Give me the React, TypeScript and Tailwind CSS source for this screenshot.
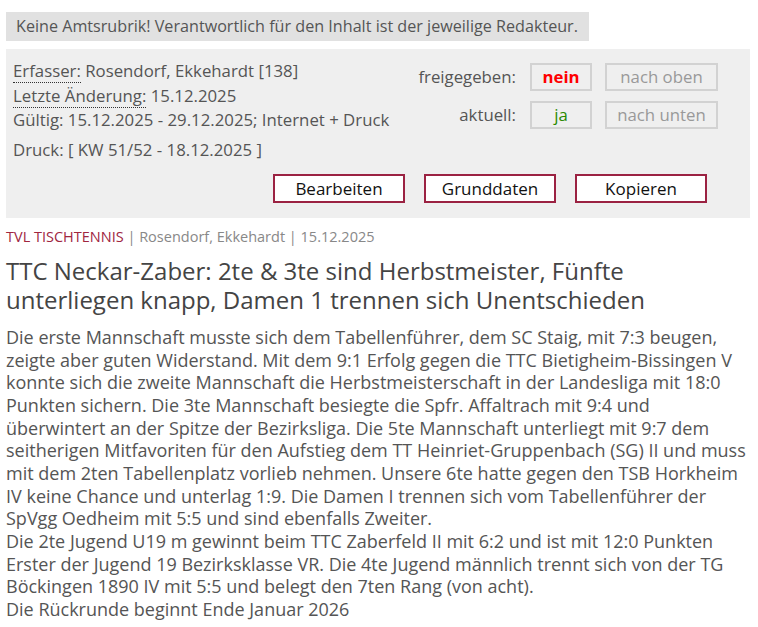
import React from 'react';

const font = { fontFamily: '"Open Sans", Arial, sans-serif' };

const StatusRow: React.FC<{ label: string; value: string; valueClass: string; move: string }> = ({
  label,
  value,
  valueClass,
  move,
}) => (
  <div className="flex items-center">
    <span className="w-[130px] pr-[14px] text-right">{label}</span>
    <span
      className={`flex h-[28px] w-[62px] items-center justify-center border-2 border-[#d2d2d2] ${valueClass}`}
    >
      {value}
    </span>
    <span className="ml-[13px] flex h-[28px] w-[113px] items-center justify-center border-2 border-[#d2d2d2] text-[#999]">
      {move}
    </span>
  </div>
);

export default function App() {
  return (
    <div className="w-[744px] ml-[6px] pt-[12px] text-[#555]" style={font}>
      {/* Notice */}
      <div className="inline-block bg-[#e1e1e1] pl-[10px] pr-[11px] h-[29px] leading-[29px] text-[16.15px]">
        Keine Amtsrubrik! Verantwortlich für den Inhalt ist der jeweilige Redakteur.
      </div>

      {/* Admin panel */}
      <div className="mt-[8px] bg-[#efefef] h-[169px] px-[7px] pt-[10px] text-[16.8px]">
        <div className="flex">
          <div className="flex-1 leading-[24.5px]">
            <div>
              <span className="border-b border-dotted border-[#333]">Erfasser:</span> Rosendorf, Ekkehardt [138]
            </div>
            <div>
              <span className="border-b border-dotted border-[#333]">Letzte Änderung:</span> 15.12.2025
            </div>
            <div>Gültig: 15.12.2025 - 29.12.2025; Internet + Druck</div>
            <div className="mt-[5px]">Druck: [ KW 51/52 - 18.12.2025 ]</div>
          </div>
          <div className="flex flex-col gap-[10px] pt-[4px] pr-[25px]">
            <StatusRow label="freigegeben:" value="nein" valueClass="font-bold text-[#f00]" move="nach oben" />
            <StatusRow label="aktuell:" value="ja" valueClass="text-[#2a8a00]" move="nach unten" />
          </div>
        </div>
        <div className="mt-[12px] flex justify-end gap-[19px] pr-[36px]">
          {['Bearbeiten', 'Grunddaten', 'Kopieren'].map(label => (
            <button
              key={label}
              className="h-[29px] w-[132px] border-2 border-[#9b2242] bg-white text-[17px] leading-[25px] text-[#111]"
            >
              {label}
            </button>
          ))}
        </div>
      </div>

      {/* Meta */}
      <div className="mt-[8px] text-[14.5px] leading-[22px] text-[#888]">
        <span className="text-[#a0263f]">TVL TISCHTENNIS</span> | Rosendorf, Ekkehardt | 15.12.2025
      </div>

      {/* Title */}
      <h1 className="mt-[8px] text-[24px] leading-[29px] text-[#444]">
        TTC Neckar-Zaber: 2te &amp; 3te sind Herbstmeister, Fünfte unterliegen knapp, Damen 1 trennen sich Unentschieden
      </h1>

      {/* Body */}
      <div className="mt-[12px] text-[18px] leading-[22.67px] text-[#555]">
        <p>
          Die erste Mannschaft musste sich dem Tabellenführer, dem SC Staig, mit 7:3 beugen, zeigte aber guten
          Widerstand. Mit dem 9:1 Erfolg gegen die TTC Bietigheim-Bissingen V konnte sich die zweite Mannschaft die
          Herbstmeisterschaft in der Landesliga mit 18:0 Punkten sichern. Die 3te Mannschaft besiegte die Spfr.
          Affaltrach mit 9:4 und überwintert an der Spitze der Bezirksliga. Die 5te Mannschaft unterliegt mit 9:7 dem
          seitherigen Mitfavoriten für den Aufstieg dem TT Heinriet-Gruppenbach (SG) II und muss mit dem 2ten
          Tabellenplatz vorlieb nehmen. Unsere 6te hatte gegen den TSB Horkheim IV keine Chance und unterlag 1:9. Die
          Damen I trennen sich vom Tabellenführer der SpVgg Oedheim mit 5:5 und sind ebenfalls Zweiter.
        </p>
        <p>
          Die 2te Jugend U19 m gewinnt beim TTC Zaberfeld II mit 6:2 und ist mit 12:0 Punkten Erster der Jugend 19
          Bezirksklasse VR. Die 4te Jugend männlich trennt sich von der TG Böckingen 1890 IV mit 5:5 und belegt den
          7ten Rang (von acht).
        </p>
        <p>Die Rückrunde beginnt Ende Januar 2026</p>
      </div>
    </div>
  );
}
